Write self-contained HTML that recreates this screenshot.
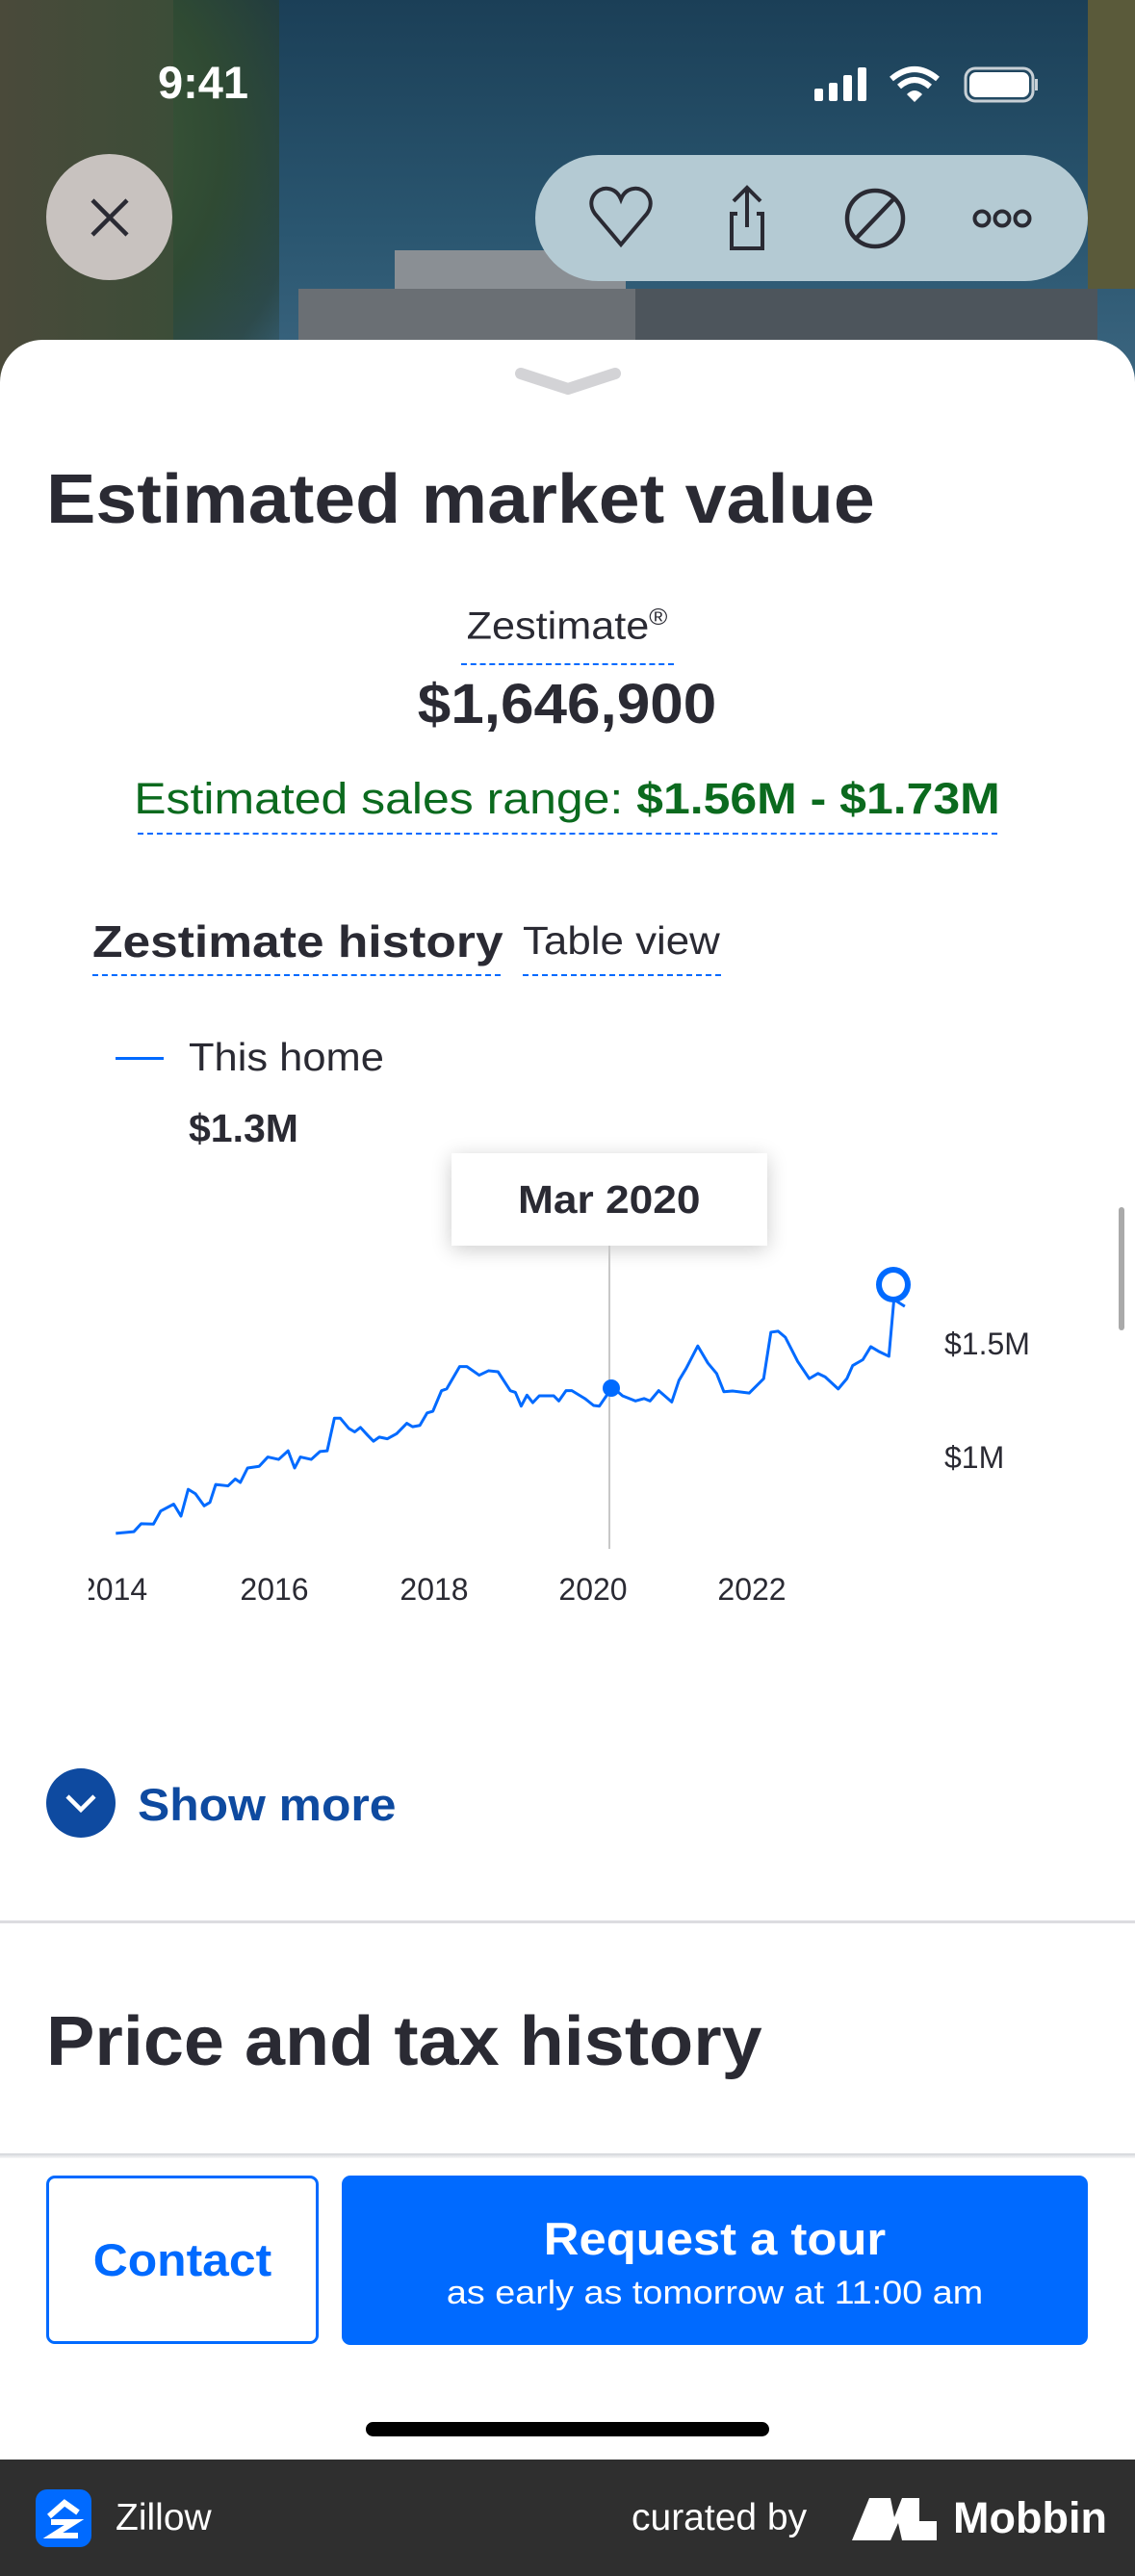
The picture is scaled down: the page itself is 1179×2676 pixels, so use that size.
<!DOCTYPE html>
<html><head><meta charset="utf-8"><style>
*{margin:0;padding:0;box-sizing:border-box}
body{width:1179px;height:2676px;position:relative;overflow:hidden;background:#fff;font-family:"Liberation Sans",sans-serif;color:#2a2a33}
.a{position:absolute;white-space:nowrap}
.c{transform:translateX(-50%)}
</style></head><body>
<div class="a" style="left:0;top:0;width:1179px;height:400px;background:linear-gradient(180deg,#1b3f57 0%,#2a5670 60%,#3c6680 100%)"></div>
<div class="a" style="left:-40px;top:-20px;width:330px;height:420px;background:radial-gradient(ellipse at 40% 40%,#3f5a3a 0%,#2f4a33 50%,rgba(40,60,45,0.6) 80%,rgba(40,60,45,0) 100%)"></div>
<div class="a" style="left:0;top:0;width:180px;height:400px;background:linear-gradient(90deg,#4a4a3a,#3c4d38)"></div>
<div class="a" style="left:1130px;top:0;width:49px;height:300px;background:#5a5a3a"></div>
<div class="a" style="left:410px;top:260px;width:240px;height:100px;background:#8a8f94"></div>
<div class="a" style="left:310px;top:300px;width:360px;height:60px;background:#6a6f74"></div>
<div class="a" style="left:660px;top:300px;width:480px;height:60px;background:#4d555c"></div>
<div class="a" style="left:164px;top:58px;font-size:47px;font-weight:bold;color:#fff">9:41</div>
<svg class="a" style="left:846px;top:68px" width="232" height="40" viewBox="0 0 232 40">
<rect x="0" y="24" width="9" height="13" rx="2" fill="#fff"/><rect x="15" y="18" width="9" height="19" rx="2" fill="#fff"/><rect x="30" y="10" width="9" height="27" rx="2" fill="#fff"/><rect x="45" y="2" width="9" height="35" rx="2" fill="#fff"/>
<path d="M80 14 Q104 -6 128 14" stroke="#fff" stroke-width="6" fill="none"/><path d="M88 22 Q104 8 120 22" stroke="#fff" stroke-width="6" fill="none"/><path d="M96 30 L104 38 L112 30 Q104 22 96 30Z" fill="#fff"/>
<rect x="157" y="3" width="70" height="34" rx="10" fill="none" stroke="#c8d0d6" stroke-width="3"/><rect x="161" y="7" width="62" height="26" rx="7" fill="#fff"/><rect x="229" y="14" width="3" height="12" fill="#c8d0d6"/>
</svg>
<div class="a" style="left:48px;top:160px;width:131px;height:131px;border-radius:50%;background:#c8c2bf"></div>
<svg class="a" style="left:92px;top:204px" width="44" height="44"><path d="M4 4L40 40M40 4L4 40" stroke="#2a2a33" stroke-width="4.5"/></svg>
<div class="a" style="left:556px;top:161px;width:574px;height:131px;border-radius:66px;background:#b4cad3"></div>
<svg class="a" style="left:612px;top:192px" width="520" height="70" viewBox="0 0 520 70">
<path d="M33 62 L6 30 C-4 16 8 2 20 4 C27 5 31 10 33 15 C35 10 39 5 46 4 C58 2 70 16 60 30 Z" fill="none" stroke="#2a2a33" stroke-width="4"/>
<path d="M164 3 V44 M150 17 L164 3 L178 17" fill="none" stroke="#2a2a33" stroke-width="4"/>
<path d="M154 30h-6v36h32V30h-6" fill="none" stroke="#2a2a33" stroke-width="4"/>
<circle cx="297" cy="35" r="29" fill="none" stroke="#2a2a33" stroke-width="4.5"/><path d="M317 14 L277 56" stroke="#2a2a33" stroke-width="4.5"/>
<circle cx="408" cy="35" r="7.5" fill="none" stroke="#2a2a33" stroke-width="4"/><circle cx="429" cy="35" r="7.5" fill="none" stroke="#2a2a33" stroke-width="4"/><circle cx="450" cy="35" r="7.5" fill="none" stroke="#2a2a33" stroke-width="4"/>
</svg>
<div class="a" style="left:0;top:353px;width:1179px;height:2323px;background:#fff;border-radius:44px 44px 0 0"></div>
<svg class="a" style="left:535px;top:380px" width="110" height="30"><path d="M6 8 L55 24 L104 8" stroke="#d3d3d6" stroke-width="12" stroke-linecap="round" fill="none"/></svg>
<div class="a" style="left:48px;top:478px;font-size:72px;font-weight:bold;transform:scaleX(1.07);transform-origin:left">Estimated market value</div>
<div class="a c" style="left:589px;top:628px;font-size:40px;transform:translateX(-50%) scaleX(1.08)">Zestimate<sup style="font-size:24px">®</sup></div>
<div class="a" style="left:479px;top:689px;width:221px;border-top:2px dashed #006aff"></div>
<div class="a c" style="left:589px;top:698px;font-size:58px;font-weight:bold;transform:translateX(-50%) scaleX(1.07)">$1,646,900</div>
<div class="a c" style="left:589px;top:804px;font-size:45px;color:#0b6a1e;transform:translateX(-50%) scaleX(1.11)">Estimated sales range: <b>$1.56M - $1.73M</b></div>
<div class="a" style="left:143px;top:865px;width:893px;border-top:2px dashed #006aff"></div>
<div class="a" style="left:96px;top:951px;font-size:46px;font-weight:bold;transform:scaleX(1.12);transform-origin:left">Zestimate history</div>
<div class="a" style="left:96px;top:1012px;width:424px;border-top:2px dashed #006aff"></div>
<div class="a" style="left:543px;top:954px;font-size:41px;transform:scaleX(1.07);transform-origin:left">Table view</div>
<div class="a" style="left:543px;top:1012px;width:206px;border-top:2px dashed #006aff"></div>
<div class="a" style="left:120px;top:1098px;width:50px;height:3px;background:#006aff"></div>
<div class="a" style="left:196px;top:1075px;font-size:41px;transform:scaleX(1.06);transform-origin:left">This home</div>
<div class="a" style="left:196px;top:1149px;font-size:41px;font-weight:bold">$1.3M</div>
<div class="a" style="left:469px;top:1198px;width:328px;height:96px;background:#fff;box-shadow:0 4px 20px rgba(0,0,0,0.2);font-size:41px;font-weight:bold;text-align:center;line-height:96px"><span style="display:inline-block;transform:scaleX(1.08)">Mar 2020</span></div>
<div class="a" style="left:632px;top:1294px;width:2px;height:315px;background:#c8c8c8"></div>
<svg class="a" style="left:0;top:1150px" width="1179" height="560" viewBox="0 0 1568 1568" preserveAspectRatio="none">
<polyline vector-effect="non-scaling-stroke" fill="none" stroke="#006aff" stroke-width="3" stroke-linejoin="round" points="160,1240 185,1235 195,1212 212,1213 222,1175 240,1155 250,1190 260,1112 270,1125 282,1160 290,1150 298,1098 315,1102 325,1082 332,1092 342,1050 358,1045 370,1018 385,1025 398,1000 407,1050 415,1018 430,1025 442,1002 452,1000 462,905 470,905 482,935 490,945 498,932 508,955 516,972 524,960 535,965 548,950 562,920 570,930 580,926 590,890 598,885 610,825 617,820 635,755 645,755 662,780 675,767 688,770 705,825 712,830 720,870 728,838 736,860 745,840 765,840 772,855 782,825 790,825 808,848 820,868 828,870 840,833 848,818 860,840 878,855 890,848 898,855 910,825 928,858 938,795 948,760 964,695 978,745 990,775 1000,828 1012,826 1035,832 1055,790 1065,655 1075,652 1085,670 1102,740 1118,790 1130,775 1140,785 1158,820 1170,790 1178,752 1192,735 1203,697 1215,712 1228,725 1235,560 1250,580"/>
</svg>
<div class="a" style="left:626px;top:1433px;width:18px;height:18px;border-radius:50%;background:#006aff"></div>
<div class="a" style="left:910px;top:1316px;width:36px;height:37px;border-radius:50%;border:6px solid #006aff;background:#fff"></div>
<div class="a" style="left:981px;top:1378px;font-size:32px;color:#2a2a33">$1.5M</div>
<div class="a" style="left:981px;top:1496px;font-size:32px;color:#2a2a33">$1M</div>
<div class="a" style="left:92px;top:1633px;width:80px;overflow:hidden;font-size:32px"><span style="margin-left:-10px">2014</span></div>
<div class="a c" style="left:285px;top:1633px;font-size:32px">2016</div>
<div class="a c" style="left:451px;top:1633px;font-size:32px">2018</div>
<div class="a c" style="left:616px;top:1633px;font-size:32px">2020</div>
<div class="a c" style="left:781px;top:1633px;font-size:32px">2022</div>
<div class="a" style="left:1162px;top:1254px;width:6px;height:128px;border-radius:3px;background:#aaa"></div>
<div class="a" style="left:48px;top:1837px;width:72px;height:72px;border-radius:50%;background:#0e4aa0"></div>
<svg class="a" style="left:64px;top:1858px" width="40" height="30"><path d="M6 8 L20 22 L34 8" stroke="#fff" stroke-width="4.5" fill="none"/></svg>
<div class="a" style="left:143px;top:1847px;font-size:47px;font-weight:bold;color:#0e4aa0;transform:scaleX(1.06);transform-origin:left">Show more</div>
<div class="a" style="left:0;top:1995px;width:1179px;height:3px;background:#dcdce0"></div>
<div class="a" style="left:48px;top:2080px;font-size:72px;font-weight:bold;transform:scaleX(1.05);transform-origin:left">Price and tax history</div>
<div class="a" style="left:0;top:2237px;width:1179px;height:6px;background:linear-gradient(#d0d3d8,#fff)"></div>
<div class="a" style="left:0;top:2242px;width:1179px;height:313px;background:#fff"></div>
<div class="a" style="left:48px;top:2260px;width:283px;height:175px;border:3px solid #006aff;border-radius:9px;text-align:center;line-height:169px;font-size:47px;font-weight:bold;color:#006aff"><span style="display:inline-block;transform:scaleX(1.06)">Contact</span></div>
<div class="a" style="left:355px;top:2260px;width:775px;height:176px;background:#006aff;border-radius:9px;color:#fff;text-align:center">
<div style="font-size:47px;font-weight:bold;margin-top:38px;transform:scaleX(1.08)">Request a tour</div>
<div style="font-size:34px;margin-top:10px;transform:scaleX(1.11)">as early as tomorrow at 11:00 am</div></div>
<div class="a" style="left:380px;top:2516px;width:419px;height:15px;border-radius:8px;background:#000"></div>
<div class="a" style="left:0;top:2555px;width:1179px;height:121px;background:#2f2f2f"></div>
<div class="a" style="left:37px;top:2586px;width:58px;height:60px;border-radius:12px;background:#006aff"></div>
<svg class="a" style="left:37px;top:2586px" width="58" height="60"><path d="M14 28 L30 14 L44 24 M16 34 H40 L18 48 H44" stroke="#fff" stroke-width="6" fill="none"/></svg>
<div class="a" style="left:120px;top:2594px;font-size:39px;color:#fff">Zillow</div>
<div class="a" style="left:656px;top:2594px;font-size:39px;color:#fff">curated by</div>
<svg class="a" style="left:885px;top:2595px" width="88" height="44"><path d="M0 44 L18 0 H40 L44 20 L52 0 H70 V24 H88 V44 H52 L48 26 L40 44 Z" fill="#fff"/></svg>
<div class="a" style="left:990px;top:2590px;font-size:45px;font-weight:bold;color:#fff">Mobbin</div>
</body></html>
